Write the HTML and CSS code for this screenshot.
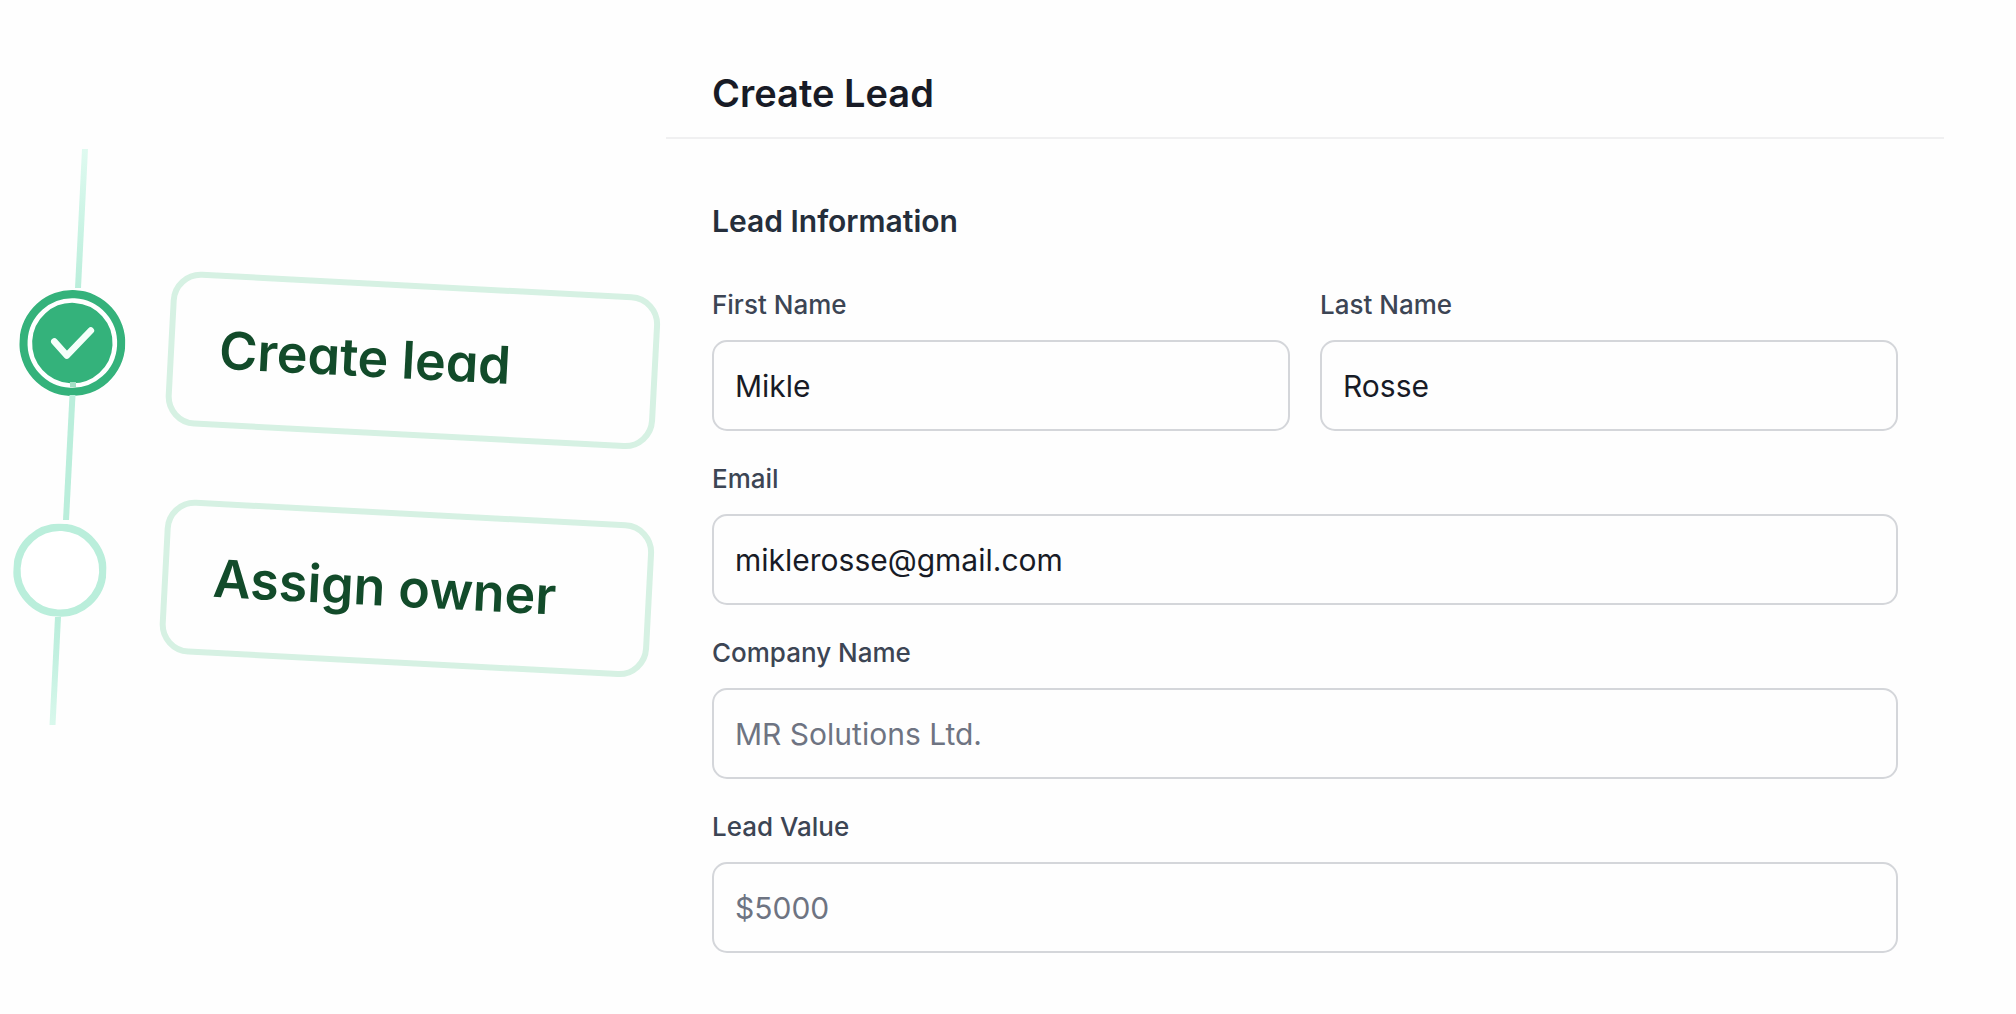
FILE: index.html
```html
<!DOCTYPE html>
<html lang="en">
<head>
<meta charset="utf-8">
<meta name="viewport" content="width=device-width, initial-scale=1">
<title>Create Lead</title>
<link rel="stylesheet" href="styles.css">
</head>
<body>
<div class="layout">
  <aside class="workflow">
    <ol class="steps">
      <li class="step">
        <svg class="marker marker-done" viewBox="-53 -53 106 106" aria-hidden="true">
          <circle r="53" fill="#34b27b"/>
          <circle r="42.5" fill="none" stroke="#fff" stroke-width="4.6"/>
          <path d="M-18-1.500-5.500 12.500 18.500-12.500" transform="rotate(-3)" fill="none" stroke="#f5fffa" stroke-width="6.600" stroke-linecap="round" stroke-linejoin="round"/>
        </svg>
        <span class="step-card">Create lead</span>
      </li>
      <li class="step">
        <svg class="marker" viewBox="-46.5 -46.5 93 93" aria-hidden="true">
          <circle r="43" fill="#fff" stroke="#baeedb" stroke-width="7.400"/>
        </svg>
        <span class="step-card">Assign owner</span>
      </li>
    </ol>
    <svg class="connectors" viewBox="0 0 120 760" aria-hidden="true">
      <defs>
        <linearGradient id="fade-in" x1="0" y1="0" x2="0" y2="1">
          <stop offset="0" stop-color="#dffaf0"/>
          <stop offset="1" stop-color="#baeedb"/>
        </linearGradient>
        <linearGradient id="fade-out" x1="0" y1="0" x2="0" y2="1">
          <stop offset="0" stop-color="#baeedb"/>
          <stop offset=".35" stop-color="#c2f0e0"/>
          <stop offset="1" stop-color="#d9f8ec"/>
        </linearGradient>
      </defs>
      <path d="M82 149h6L81 288h-6z" fill="url(#fade-in)"/>
      <path d="M70 382h6v5h-6z" fill="#a4e0c6"/>
      <path d="M69.500 395h6L69 520h-6z" fill="#baeedb"/>
      <path d="M55 617h6L55.500 725h-6z" fill="url(#fade-out)"/>
    </svg>
  </aside>

  <main class="panel">
    <header class="panel-header">
      <h1 class="panel-title">Create Lead</h1>
    </header>
    <form class="lead-form">
      <h2 class="section-title">Lead Information</h2>
      <div class="field">
        <label for="first-name">First Name</label>
        <input id="first-name" type="text" value="Mikle">
      </div>
      <div class="field">
        <label for="last-name">Last Name</label>
        <input id="last-name" type="text" value="Rosse">
      </div>
      <div class="field field-wide">
        <label for="email">Email</label>
        <input id="email" type="email" value="miklerosse@gmail.com">
      </div>
      <div class="field field-wide">
        <label for="company">Company Name</label>
        <input id="company" type="text" placeholder="MR Solutions Ltd.">
      </div>
      <div class="field field-wide">
        <label for="lead-value">Lead Value</label>
        <input id="lead-value" type="text" placeholder="$5000">
      </div>
    </form>
  </main>
</div>
</body>
</html>
```

FILE: styles.css
```css
* {
  box-sizing: border-box;
}

body {
  margin: 0;
  background: #fefefe;
  color: #181b26;
  font-family: Inter, "Liberation Sans", sans-serif;
}

.layout {
  display: grid;
  grid-template-columns: 666px minmax(0, 1fr);
  padding-right: 72px;
}

/* Workflow timeline */
.workflow {
  position: relative;
  padding: 279px 0 0 19px;
}

.steps {
  display: flex;
  flex-direction: column;
  gap: 73px;
  margin: 0;
  padding: 0;
  list-style: none;
}

.step {
  display: flex;
  align-items: center;
  justify-content: space-between;
  width: 639px;
  transform: rotate(3deg);
}

.step + .step {
  margin-left: -6px;
}

.marker {
  width: 93px;
  height: 93px;
}

.marker-done {
  width: 106px;
  height: 106px;
}

.step-card {
  display: flex;
  align-items: center;
  width: 490px;
  height: 155px;
  padding-left: 45px;
  border: 6px solid #d6f1e3;
  border-radius: 30px;
  background: #fefefe;
  color: #124b2a;
  font-size: 52px;
  font-weight: 600;
  font-feature-settings: "cv11";
  white-space: nowrap;
}

.connectors {
  position: absolute;
  top: 0;
  left: 0;
  width: 120px;
  height: 760px;
}

/* Form panel */
.panel-header {
  padding: 69px 46px 20px;
  border-bottom: 2px solid #f0f0f1;
}

.panel-title {
  margin: 0;
  font-size: 38px;
  font-weight: 600;
  line-height: 48px;
}

.lead-form {
  display: grid;
  grid-template-columns: 1fr 1fr;
  gap: 30px;
  padding: 62px 46px;
}

.section-title {
  grid-column: 1 / -1;
  margin: 0 0 16px;
  color: #252e3b;
  font-size: 30px;
  font-weight: 600;
  line-height: 40px;
}

.field {
  display: flex;
  flex-direction: column;
  gap: 17px;
}

.field-wide {
  grid-column: 1 / -1;
}

.field label {
  color: #3c4554;
  font-size: 26px;
  font-weight: 500;
  line-height: 36px;
}

.field input {
  width: 100%;
  height: 91px;
  padding: 0 21px;
  border: 2px solid #d4d6da;
  border-radius: 15px;
  background: #fefefe;
  color: #181b26;
  font: 400 30px/40px Inter, "Liberation Sans", sans-serif;
}

.field input::placeholder {
  color: #6e7482;
  opacity: 1;
}
```
